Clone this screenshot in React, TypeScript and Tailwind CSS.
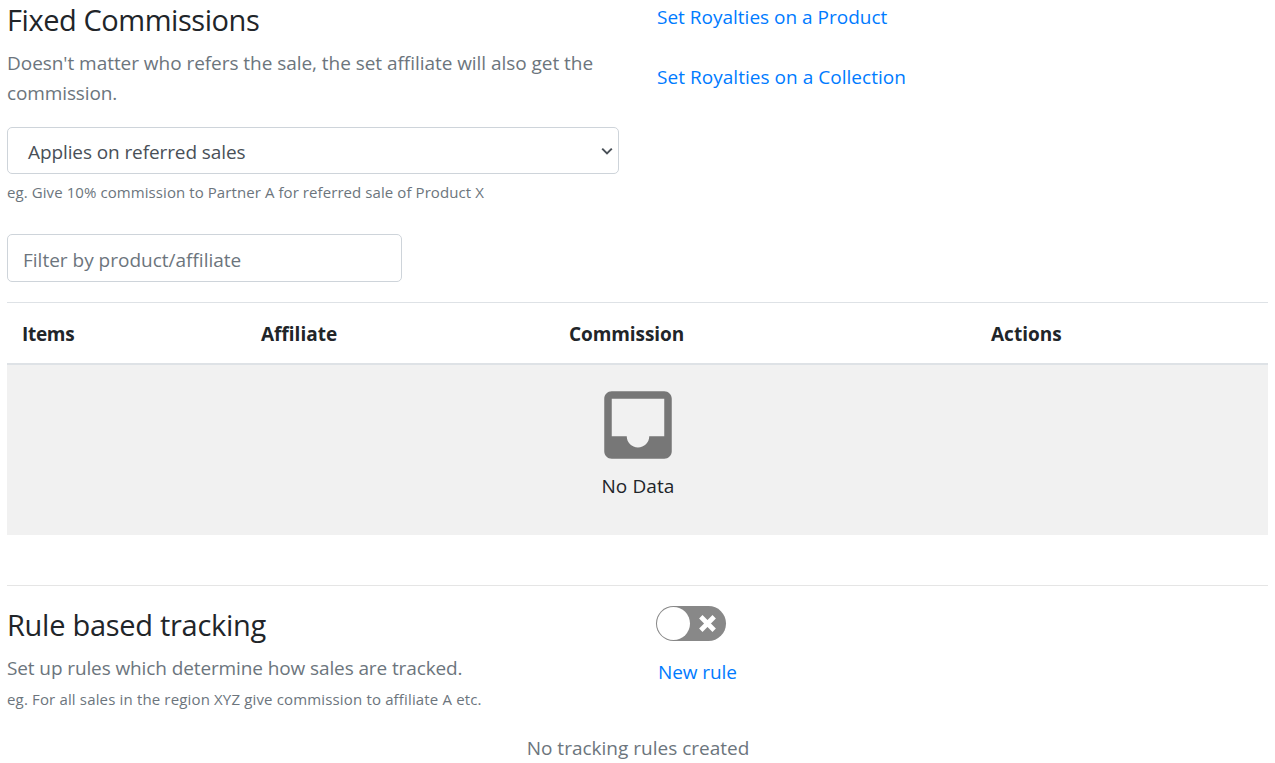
import React from "react";

const columns = [
  { label: "Items", cell: "w-[239px] pl-[15px] tracking-[-0.3px]" },
  { label: "Affiliate", cell: "w-[308px] pl-[15px]" },
  { label: "Commission", cell: "w-[422px] pl-[15px] tracking-[-0.08px]" },
  { label: "Actions", cell: "w-[292px] pl-[15px]" },
];

function InboxIcon() {
  return (
    <svg className="h-[90px] w-[90px]" viewBox="0 0 24 24" fill="#777777">
      <path d="M19 3H5c-1.1 0-2 .9-2 2v14c0 1.1.9 2 2 2h14c1.1 0 2-.9 2-2V5c0-1.1-.9-2-2-2zm0 12h-4c0 1.66-1.35 3-3 3s-3-1.34-3-3H5V5h14v10z" />
    </svg>
  );
}

function Toggle() {
  return (
    <button
      type="button"
      role="switch"
      aria-checked="false"
      aria-label="Rule based tracking"
      className="flex h-[35px] w-[70px] items-center justify-between rounded-full bg-[#888888] pr-[10px] pl-px"
    >
      <span className="h-[33px] w-[33px] rounded-full bg-white" />
      <svg className="h-[17px] w-[17px]" viewBox="0 0 17 17" stroke="#fff" strokeWidth="4.8">
        <path d="M1.8 1.8L15.2 15.2M15.2 1.8L1.8 15.2" />
      </svg>
    </button>
  );
}

export default function App() {
  return (
    <main className="h-[763px] overflow-hidden bg-white px-[7px] pt-[2px] font-['Open_Sans','Noto_Sans',sans-serif] text-[19px] leading-[30px] text-[#212529]">
      <section className="flex h-[232px]">
        <div className="w-[612px]">
          <h4 className="mb-[10px] text-[29px] leading-[36px] tracking-[-0.44px]">Fixed Commissions</h4>
          <p className="mb-[19px] tracking-[-0.045px] text-[#6c757d]">
            Doesn't matter who refers the sale, the set affiliate will also get the
            <br />
            <span className="tracking-[-0.12px]">commission.</span>
          </p>
          <div className="flex h-[47px] items-center justify-between rounded-[5px] border border-[#ced4da] pr-[5px] pl-[20px] text-[#495057]">
            <span className="pt-[2px] tracking-[-0.1px]">Applies on referred sales</span>
            <svg className="h-[8px] w-[12px]" viewBox="0 0 12 8" fill="none" stroke="#495057" strokeWidth="2">
              <path d="M1.2 1.6L6 6.4L10.8 1.6" />
            </svg>
          </div>
          <p className="mt-[6px] text-[15px] leading-[24px] tracking-[0.08px] text-[#6c757d]">
            eg. Give 10% commission to Partner A for referred sale of Product X
          </p>
        </div>
        <nav className="ml-[38px] flex flex-col gap-[30px] text-[#007bff]">
          <a href="#product">Set Royalties on a Product</a>
          <a href="#collection" className="tracking-[0.035px]">Set Royalties on a Collection</a>
        </nav>
      </section>

      <input
        type="text"
        placeholder="Filter by product/affiliate"
        className="block h-[48px] w-[395px] rounded-[5px] border border-[#ced4da] px-[15px] pt-[3px] placeholder:text-[#6c757d]"
      />

      <table className="mt-[20px] w-[1261px] table-fixed border-collapse text-left">
        <thead>
          <tr className="flex h-[63px] items-center border-t border-b-2 border-[#dee2e6]">
            {columns.map((c) => (
              <th key={c.label} className={`${c.cell} pt-[2px] font-bold`}>
                {c.label}
              </th>
            ))}
          </tr>
        </thead>
        <tbody>
          <tr className="flex h-[170px] bg-[#f1f1f1]">
            <td className="flex w-full flex-col items-center pt-[15px]">
              <InboxIcon />
              <span className="mt-px ml-px tracking-[0.1px]">No Data</span>
            </td>
          </tr>
        </tbody>
      </table>

      <hr className="mt-[50px] border-[#e5e5e5]" />

      <section className="mt-[21px] flex">
        <div className="w-[612px]">
          <h4 className="mb-[10px] text-[29px] leading-[36px] tracking-[-0.28px]">Rule based tracking</h4>
          <p className="tracking-[-0.11px] text-[#6c757d]">Set up rules which determine how sales are tracked.</p>
          <p className="mt-[4px] text-[15px] leading-[24px] tracking-[0.155px] text-[#6c757d]">
            eg. For all sales in the region XYZ give commission to affiliate A etc.
          </p>
        </div>
        <div className="ml-[37px] flex flex-col items-start">
          <div className="-mt-px">
            <Toggle />
          </div>
          <a href="#new" className="mt-[16px] ml-[2px] tracking-[-0.1px] text-[#007bff]">
            New rule
          </a>
        </div>
      </section>
      <p className="mt-[22px] pl-px text-center text-[#6c757d]">No tracking rules created</p>
    </main>
  );
}
